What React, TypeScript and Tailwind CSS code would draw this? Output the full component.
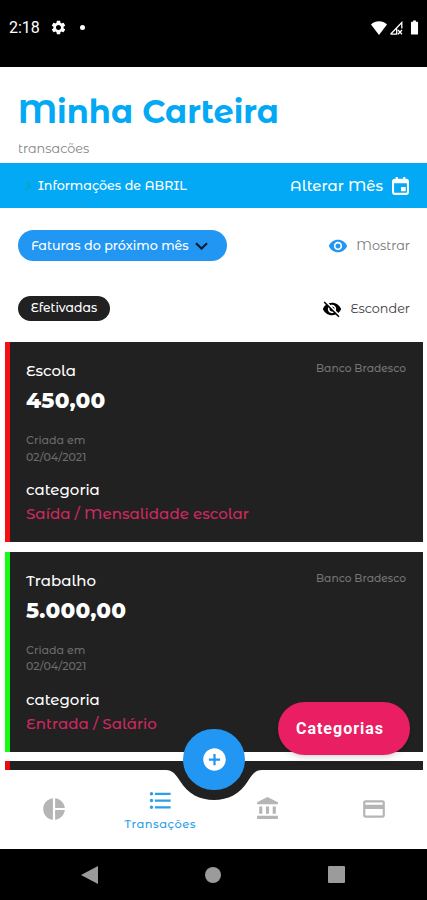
import { clsx } from "clsx";
import {
  MdAccountBalance,
  MdAddCircle,
  MdBatteryFull,
  MdChevronRight,
  MdFormatListBulleted,
  MdPayment,
  MdPieChart,
  MdSettings,
  MdVisibility,
  MdVisibilityOff,
} from "react-icons/md";

interface Transaction {
  title: string;
  amount: string;
  bank: string;
  date: string;
  category: string;
  type: "in" | "out";
}

const transactions: Transaction[] = [
  {
    title: "Escola",
    amount: "450,00",
    bank: "Banco Bradesco",
    date: "02/04/2021",
    category: "Saída / Mensalidade escolar",
    type: "out",
  },
  {
    title: "Trabalho",
    amount: "5.000,00",
    bank: "Banco Bradesco",
    date: "02/04/2021",
    category: "Entrada / Salário",
    type: "in",
  },
];

function StatusBar() {
  return (
    <div className="flex h-[67px] shrink-0 items-start bg-black pt-[18px] text-white">
      <span className="ml-[9px] w-[41px] font-[Roboto] text-[16px] leading-5">2:18</span>
      <MdSettings className="mt-px h-[17px] w-[17px]" />
      <span className="mt-[7px] ml-[13px] h-[5px] w-[5px] rounded-full bg-white" />
      <div className="mt-px mr-[4px] ml-auto flex items-center">
        <svg viewBox="0 0 16 14" className="h-[14px] w-4">
          <path d="M0 3.4C4.4-.8 11.6-.8 16 3.4L8 14z" fill="currentColor" />
        </svg>
        <svg viewBox="0 0 14 14" className="ml-0.5 h-[14px] w-[14px]">
          <path d="M1.500 13.200 12.800 1.500v6M1.500 13.200h6.200V7.500M9 9l4 4.300M13 9l-4 4.300" fill="none" stroke="currentColor" strokeWidth="1.300" />
        </svg>
        <MdBatteryFull className="ml-[3px] h-[17px] w-[17px]" />
      </div>
    </div>
  );
}

function CalendarIcon() {
  return (
    <svg viewBox="0 0 18 19" className="ml-[9px] h-[18px] w-[17px]">
      <path d="M5 0v4M13 0v4" stroke="currentColor" strokeWidth="2.200" />
      <rect x="1.100" y="3" width="15.800" height="14.800" rx="2" fill="none" stroke="currentColor" strokeWidth="2.200" />
      <path d="M1 3h16v3.500H1zM9.500 10.500h5V15h-5z" fill="currentColor" />
    </svg>
  );
}

function TransactionCard({ item }: { item: Transaction }) {
  return (
    <article
      className={clsx(
        "relative h-[200px] border-l-[5px] bg-[#212121] pt-[19px] pl-4 text-white",
        item.type === "in" ? "border-[#14fb14]" : "border-[#f80f13]"
      )}
    >
      <span className="absolute top-[19px] right-[17px] text-[10.700px] leading-4 font-medium text-[#757575]">
        {item.bank}
      </span>
      <h2 className="text-[15px] leading-5 font-medium">{item.title}</h2>
      <p className="mt-[6px] text-[21.500px] leading-[26px] font-extrabold tracking-[0.3px]">{item.amount}</p>
      <p className="mt-[19px] text-[11px] leading-[16.500px] font-medium text-[#6c6c6c]">
        Criada em
        <br />
        {item.date}
      </p>
      <p className="mt-[14px] text-[15px] leading-[22px] font-medium">categoria</p>
      <p className="mt-[2px] text-[15px] leading-[22px] font-medium tracking-[0.050px] text-[#d02860]">{item.category}</p>
    </article>
  );
}

function BottomNav() {
  return (
    <nav className="absolute inset-x-0 bottom-0 h-[79px] text-[#b5b5b5]">
      <svg viewBox="0 0 427 79" className="absolute inset-0 h-full w-full">
        <path
          d="M0 0H166C173 0 176 5 180 11C188 24 200 30 214 30S240 24 248 11C252 5 255 0 262 0H427V79H0Z"
          fill="white"
        />
      </svg>
      <div className="relative grid h-full grid-cols-4">
        <div className="flex justify-center pt-[26px] pl-px">
          <MdPieChart className="h-[26px] w-[26px]" />
        </div>
        <div className="flex flex-col items-center pt-[17px] text-[#2d9fe6]">
          <MdFormatListBulleted className="h-[27px] w-[27px]" />
          <span className="mt-px text-[11.500px] leading-[18px] font-medium tracking-[0.450px]">Transações</span>
        </div>
        <div className="flex justify-center pt-[26px] pl-px">
          <MdAccountBalance className="h-[25px] w-[25px]" />
        </div>
        <div className="flex justify-center pt-[26px]">
          <MdPayment className="h-[26px] w-[26px]" />
        </div>
      </div>
      <button
        type="button"
        className="absolute -top-[41px] left-[183px] flex h-[61px] w-[62px] items-center justify-center rounded-full bg-[#2196f3] text-white"
      >
        <MdAddCircle className="h-[27px] w-[27px]" />
      </button>
    </nav>
  );
}

function SystemNav() {
  return (
    <div className="relative flex h-[51px] shrink-0 items-center justify-between bg-black pr-[82px] pl-[81px] text-[#9b9b9b]">
      <svg viewBox="0 0 17 18" className="h-[18px] w-[17px]">
        <path d="M0 9 17 0v18z" fill="currentColor" />
      </svg>
      <span className="h-4 w-4 rounded-full bg-[#9b9b9b]" />
      <span className="h-[17px] w-[17px] rounded-[1px] bg-[#9b9b9b]" />
    </div>
  );
}

export default function App() {
  return (
    <div className="flex h-[900px] w-full flex-col overflow-hidden bg-white font-['Montserrat_Alternates',Inter,sans-serif]">
      <StatusBar />
      <main className="relative flex-1 overflow-hidden">
        <header className="h-24 pt-[25px] pl-[18px]">
          <h1 className="text-[32px] leading-10 font-bold text-[#03a9f4]">Minha Carteira</h1>
          <p className="mt-[8px] text-[12.800px] leading-[18px] text-[#858585]">transacões</p>
        </header>

        <div className="flex h-[45px] items-center bg-[#03a9f4] pr-[18px] pl-[20px] text-white">
          <MdChevronRight className="h-4 w-4 text-[#0aa9a5]" />
          <span className="ml-[2px] text-[12.700px] font-medium">Informações de ABRIL</span>
          <span className="mt-px ml-auto text-[15px] font-medium">Alterar Mês</span>
          <CalendarIcon />
        </div>

        <div className="mt-[22px] flex h-[31px] items-center justify-between pr-[17px] pl-[18px]">
          <button type="button" className="flex h-[31px] w-[209px] items-center rounded-full bg-[#2196f3] pl-[13px] text-[12.700px] font-medium whitespace-nowrap text-white">
            Faturas do próximo mês
            <svg viewBox="0 0 13 8" className="mr-[19px] ml-auto h-2 w-[13px]">
              <path d="m1 1.200 5.500 5.300L12 1.200" fill="none" stroke="#0c1c2c" strokeWidth="2.200" />
            </svg>
          </button>
          <div className="flex items-center text-[12.800px] text-[#757575]">
            <MdVisibility className="mr-2 h-5 w-5 text-[#2196f3]" />
            Mostrar
          </div>
        </div>

        <div className="mt-[35px] flex h-[25px] items-center justify-between pr-[17px] pl-[18px]">
          <span className="flex h-[25px] w-[92px] items-center justify-center rounded-full bg-[#212121] text-[12.400px] font-medium text-white">
            Efetivadas
          </span>
          <div className="flex items-center text-[12.800px] text-[#3c3c3c]">
            <MdVisibilityOff className="mr-2 h-5 w-5 text-black" />
            Esconder
          </div>
        </div>

        <section className="mt-[21px] flex flex-col gap-[9.500px] pr-1 pl-[5px]">
          {transactions.map((item) => (
            <TransactionCard key={item.title} item={item} />
          ))}
          <div className="h-[200px] border-l-[5px] border-[#e80c0f] bg-[#212121]" />
        </section>

        <button
          type="button"
          className="absolute right-[17px] bottom-[94px] h-[53px] w-[132px] rounded-full bg-[#e91e63] pt-px pr-2 font-[Roboto] text-[16px] font-bold tracking-[1px] text-white shadow-md"
        >
          Categorias
        </button>
        <BottomNav />
      </main>
      <SystemNav />
    </div>
  );
}
